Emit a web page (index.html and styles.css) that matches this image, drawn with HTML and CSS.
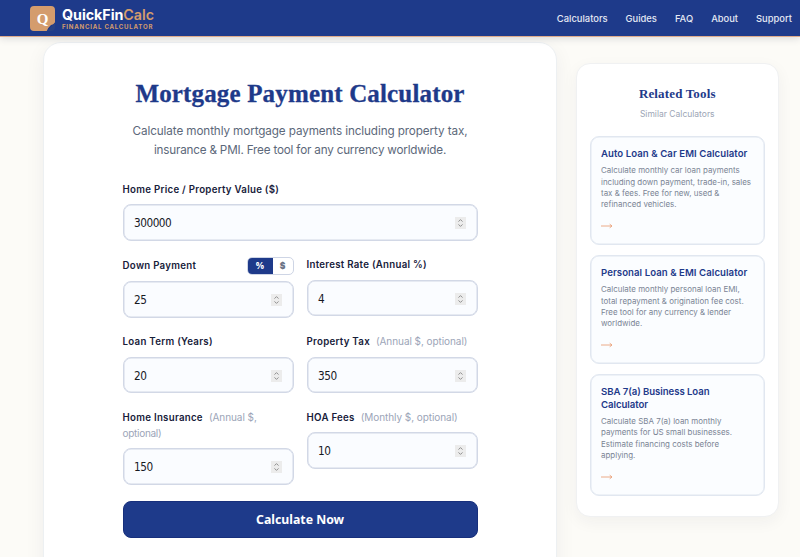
FILE: index.html
```html
<!DOCTYPE html>
<html lang="en">
<head>
<meta charset="utf-8">
<title>Mortgage Payment Calculator</title>
<link rel="stylesheet" href="styles.css">
</head>
<body>
<svg class="defs" aria-hidden="true"><symbol id="spin" viewBox="0 0 11 12"><rect width="11" height="12" fill="#ececec"/><path d="M3.5 4.6 5.5 2.6 7.5 4.6M3.5 7.4 5.5 9.4 7.5 7.4" fill="none" stroke="#858585" stroke-width=".9"/></symbol>
<symbol id="arrow" viewBox="0 0 12 6"><path d="M0 3H11M8.7 1.2 11 3 8.7 4.8" fill="none" stroke="#eaa27b" stroke-width=".9"/></symbol></svg>
<header class="header">
  <div class="brand">
    <svg class="logo" viewBox="0 0 25 25"><path d="M4 0H21Q25 0 25 4V16.5Q24 18.5 21 19 18.5 21 16.8 25H4Q0 25 0 21V4Q0 0 4 0Z" fill="#d49c6d"/><path d="M25 16.5Q22 20 16.8 25H21Q25 25 25 21Z" fill="#284184"/><text x="12.5" y="18" text-anchor="middle" class="logo-letter">Q</text></svg>
    <div class="brand-text"><div class="brand-name"><span>QuickFin</span><span class="gold">Calc</span></div><div class="tagline">FINANCIAL CALCULATOR</div></div>
  </div>
  <nav class="nav"><a>Calculators</a><a>Guides</a><a>FAQ</a><a>About</a><a>Support</a></nav>
</header>
<main class="page">
  <section class="card">
    <h1>Mortgage Payment Calculator</h1>
    <p class="intro"><span>Calculate monthly mortgage payments including property tax,</span><br><span class="tight">insurance &amp; PMI. Free tool for any currency worldwide.</span></p>
    <form class="form">
      <div class="field wide"><div class="label"><span>Home Price / Property Value ($)</span></div><div class="input"><span>300000</span><svg><use href="#spin"/></svg></div></div>
      <div class="field"><div class="label split"><span>Down Payment</span><div class="toggle"><b class="on">%</b><b>$</b></div></div><div class="input"><span>25</span><svg><use href="#spin"/></svg></div></div>
      <div class="field"><div class="label"><span>Interest Rate (Annual %)</span></div><div class="input"><span>4</span><svg><use href="#spin"/></svg></div></div>
      <div class="field"><div class="label"><span>Loan Term (Years)</span></div><div class="input"><span>20</span><svg><use href="#spin"/></svg></div></div>
      <div class="field"><div class="label"><span>Property Tax</span><small>(Annual $, optional)</small></div><div class="input"><span>350</span><svg><use href="#spin"/></svg></div></div>
      <div class="field"><div class="label"><span>Home Insurance</span><small>(Annual $,</small><br><small class="cont">optional)</small></div><div class="input"><span>150</span><svg><use href="#spin"/></svg></div></div>
      <div class="field"><div class="label"><span>HOA Fees</span><small>(Monthly $, optional)</small></div><div class="input"><span>10</span><svg><use href="#spin"/></svg></div></div>
      <button class="submit wide" type="button">Calculate Now</button>
    </form>
  </section>
  <aside class="side">
    <h2>Related Tools</h2>
    <p class="sub">Similar Calculators</p>
    <div class="tool"><h3>Auto Loan &amp; Car EMI Calculator</h3><p>Calculate monthly car loan payments<br>including down payment, trade-in, sales<br>tax &amp; fees. Free for new, used &amp;<br>refinanced vehicles.</p><svg><use href="#arrow"/></svg></div>
    <div class="tool"><h3>Personal Loan &amp; EMI Calculator</h3><p>Calculate monthly personal loan EMI,<br>total repayment &amp; origination fee cost.<br>Free tool for any currency &amp; lender<br>worldwide.</p><svg><use href="#arrow"/></svg></div>
    <div class="tool"><h3>SBA 7(a) Business Loan<br>Calculator</h3><p>Calculate SBA 7(a) loan monthly<br>payments for US small businesses.<br>Estimate financing costs before<br>applying.</p><svg><use href="#arrow"/></svg></div>
  </aside>
</main>
</body>
</html>
```
FILE: styles.css
```css
* { box-sizing: border-box; margin: 0; padding: 0; }
body { width: 800px; height: 557px; overflow: hidden; font-family: Inter, sans-serif; background: #fcfbf7; color: #17203a; }
.defs { display: block; width: 0; height: 0; }
.header { position: relative; z-index: 1; height: 37px; background: #1e3a8a; border-bottom: 1px solid #dfab8b; box-shadow: 0 1px 8px rgba(20, 25, 50, .16); display: flex; justify-content: space-between; align-items: center; padding: 0 8px 0 30px; }
.brand { display: flex; align-items: center; gap: 7px; }
.logo { width: 25px; height: 25px; }
.logo-letter { font: bold 15px "Liberation Serif", serif; fill: #fff; }
.brand-text { padding-top: 1px; }
.brand-name { font-size: 14.3px; font-weight: 700; line-height: 16px; letter-spacing: -.05px; color: #fff; white-space: nowrap; }
.gold { color: #d49c6d; font-weight: 600; }
.tagline { font-size: 6.1px; line-height: 8px; font-weight: 700; letter-spacing: .76px; color: #d49c6d; white-space: nowrap; }
.nav { display: flex; gap: 18px; font-size: 9.4px; font-weight: 500; color: #e5e9f4; }
.page { display: flex; align-items: flex-start; height: 520px; overflow: hidden; padding: 5px 0 0 43px; }
.card { flex: none; width: 514px; height: 560px; background: #fff; border: 1px solid #edf0f2; border-radius: 18px; box-shadow: 0 5px 20px rgba(30, 40, 60, .06); padding-top: 35px; }
h1 { font: bold 25px/32px "Liberation Serif", serif; letter-spacing: .16px; color: #1e3a8a; -webkit-text-stroke: .3px #1e3a8a; text-align: center; white-space: nowrap; }
.intro { margin-top: 12.3px; font-size: 11.7px; line-height: 18.5px; letter-spacing: -.1px; color: #5c687a; text-align: center; white-space: nowrap; }
.tight { letter-spacing: -.19px; }
.form { width: 355px; margin: 21.7px auto 0 78.6px; display: grid; grid-template-columns: 171px 171px; column-gap: 13px; row-gap: 16.5px; align-items: start; }
.wide { grid-column: span 2; }
.label { font-size: 9.7px; font-weight: 600; line-height: 16px; letter-spacing: .27px; margin-bottom: 6.4px; white-space: nowrap; }
.form > .field:first-child .label { padding-top: 1px; margin-bottom: 6.5px; }
.split { display: flex; justify-content: space-between; height: 17.5px; }
.split > span { padding-top: .5px; }
.label small { font-size: 10px; line-height: 0; font-weight: 400; letter-spacing: -.06px; color: #9ca5b8; margin-left: 6px; }
.label small.cont { margin-left: 0; letter-spacing: -.3px; }
.toggle { width: 47px; height: 17.5px; display: flex; border: 1px solid #ced5e5; border-radius: 5px; overflow: hidden; }
.toggle b { flex: 1; text-align: center; font-size: 8.5px; line-height: 17px; color: #697386; }
.toggle .on { flex: 0 0 25px; background: #1e3a8a; color: #fff; }
.input { height: 36.5px; border: 1px solid #d2d8e6; box-shadow: inset 0 0 0 .5px #d2d8e6; border-radius: 8px; background: #fafcff; display: flex; justify-content: space-between; align-items: center; padding: 1px 11px 0 10.5px; font: 11.7px "DejaVu Sans Condensed", "DejaVu Sans", sans-serif; font-stretch: condensed; letter-spacing: -.5px; color: #17191f; }
.input svg { width: 11px; height: 12px; }
.submit { height: 37px; border: 1px solid #172f7c; border-radius: 8px; background: #1e3a8a; color: #fff; font: bold 12.3px "Noto Sans", sans-serif; }
.side { flex: none; width: 203px; height: 453.5px; margin: 21.2px 0 0 19px; background: #fff; border: 1px solid #f0f1f2; border-radius: 14px; box-shadow: 0 5px 16px rgba(30, 40, 60, .05); padding: 21px 13px 0 12.5px; }
h2 { font: bold 13px/18px "Liberation Serif", serif; letter-spacing: .15px; color: #1e3a8a; text-align: center; }
.sub { font-size: 8.5px; line-height: 12px; margin: 5px 0 16.3px; text-align: center; color: #9ca5b5; }
.tool { height: 109px; border: 1px solid #e1e7f0; box-shadow: inset 0 0 0 .5px #e1e7f0; border-radius: 9px; background: #fbfdff; padding: 11px 0 0 10.5px; margin-bottom: 10px; white-space: nowrap; }
.tool:last-child { height: 121.5px; }
.tool h3 { font-size: 9.6px; line-height: 12.7px; letter-spacing: .07px; font-weight: 600; color: #1e3a8a; }
.tool:last-child h3 { letter-spacing: -.06px; }
.tool p { margin-top: 4px; font-size: 7.95px; line-height: 11.4px; color: #7a8494; }
.tool svg { display: block; width: 12px; height: 6px; margin-top: 12px; }
```
